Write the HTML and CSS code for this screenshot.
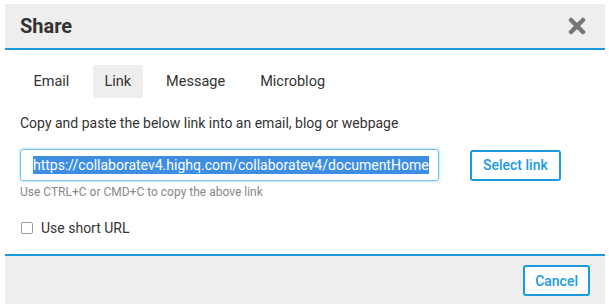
FILE: index.html
```html
<!DOCTYPE html>
<html lang="en">
<head>
    <meta charset="UTF-8">
    <title>Share</title>
    <link rel="stylesheet" href="styles.css">
</head>
<body>
    <div class="dialog">
        <div class="dialog-header">
            <h2>Share</h2>
            <span class="close-btn">
                <svg width="18" height="18" viewBox="0 0 18 18">
                    <path d="M3 3 L15 15 M15 3 L3 15" stroke="#777" stroke-width="4.5" stroke-linecap="round"/>
                </svg>
            </span>
        </div>

        <div class="dialog-body">
            <div class="tabs">
                <span class="tab">Email</span>
                <span class="tab active">Link</span>
                <span class="tab">Message</span>
                <span class="tab">Microblog</span>
            </div>

            <p class="intro">Copy and paste the below link into an email, blog or webpage</p>

            <div class="link-row">
                <div class="link-input">
                    <span class="selected">https://collaboratev4.highq.com/collaboratev4/documentHome</span>
                </div>
                <button class="btn">Select link</button>
            </div>
            <p class="hint">Use CTRL+C or CMD+C to copy the above link</p>

            <label class="short-url">
                <span class="checkbox"></span>
                Use short URL
            </label>
        </div>

        <div class="dialog-footer">
            <button class="btn">Cancel</button>
        </div>
    </div>
</body>
</html>
```

FILE: styles.css
```css
body {
    margin: 0;
    background-color: #fff;
    font-family: Roboto, "Liberation Sans", sans-serif;
    color: #333;
}
.dialog {
    width: 600px;
    margin: 4px 0 0 5px;
}
.dialog-header {
    display: flex;
    align-items: center;
    justify-content: space-between;
    height: 44px;
    padding: 0 19px 0 15px;
    background-color: #eee;
    border-bottom: 2px solid #1a9be0;
}
.dialog-header h2 {
    margin: 0;
    font-size: 20px;
    font-weight: bold;
    color: #333;
}
.close-btn {
    display: flex;
}
.dialog-body {
    padding: 15px 15px 18px;
}
.tabs {
    display: flex;
    gap: 12px;
    margin-left: 2px;
}
.tab {
    padding: 0 11.5px;
    height: 33px;
    line-height: 33px;
    font-size: 14.5px;
    border-radius: 3px;
    color: #333;
}
.tab.active {
    background-color: #eee;
}
.intro {
    margin: 15px 0 16px;
    font-size: 14px;
    line-height: 20px;
}
.link-row {
    display: flex;
    align-items: center;
    gap: 31px;
}
.link-input {
    width: 394px;
    height: 30px;
    padding: 0 11px 0 12px;
    border: 1px solid #7cc2ee;
    border-radius: 3px;
    box-shadow: 0 0 3px rgba(26, 155, 224, 0.5);
    display: flex;
    align-items: center;
    overflow: hidden;
    white-space: nowrap;
}
.selected {
    background-color: #3d8ee0;
    color: #fff;
    font-size: 14px;
    line-height: 18px;
}
.btn {
    font-family: Roboto, "Liberation Sans", sans-serif;
    background-color: #fff;
    color: #1a9be0;
    border: 2px solid #1a9be0;
    border-radius: 3px;
    font-size: 14px;
    font-weight: 500;
    height: 31px;
    padding: 0 11px;
    cursor: pointer;
}
.hint {
    margin: 3px 0 20px;
    font-size: 12px;
    line-height: 16px;
    color: #888;
}
.short-url {
    display: flex;
    align-items: center;
    gap: 8px;
    font-size: 14px;
    margin-left: 1px;
}
.checkbox {
    width: 10px;
    height: 10px;
    border: 1px solid #999;
    border-radius: 2px;
}
.dialog-footer {
    display: flex;
    justify-content: flex-end;
    padding: 9px 15px 8px;
    background-color: #eee;
    border-top: 2px solid #1a9be0;
}
.dialog-footer .btn {
    height: 31px;
    padding: 0 10px;
}
```
